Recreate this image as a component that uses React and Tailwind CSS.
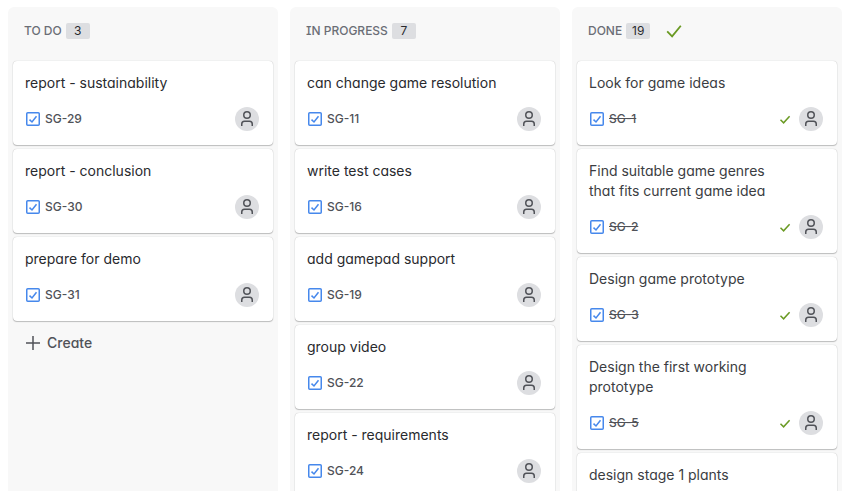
const columns = [
  {
    name: "TO DO",
    count: 3,
    canCreate: true,
    cards: [
      { title: "report - sustainability", id: "SG-29" },
      { title: "report - conclusion", id: "SG-30" },
      { title: "prepare for demo", id: "SG-31" },
    ],
  },
  {
    name: "IN PROGRESS",
    count: 7,
    cards: [
      { title: "can change game resolution", id: "SG-11" },
      { title: "write test cases", id: "SG-16" },
      { title: "add gamepad support", id: "SG-19" },
      { title: "group video", id: "SG-22" },
      { title: "report - requirements", id: "SG-24" },
    ],
  },
  {
    name: "DONE",
    count: 19,
    done: true,
    cards: [
      { title: "Look for game ideas", id: "SG-1" },
      { title: "Find suitable game genres that fits current game idea", id: "SG-2" },
      { title: "Design game prototype", id: "SG-3" },
      { title: "Design the first working prototype", id: "SG-5" },
      { title: "design stage 1 plants" },
    ],
  },
];

function TaskIcon() {
  return (
    <svg className="size-4 shrink-0" viewBox="0 0 16 16" fill="none" stroke="#4688ec" aria-hidden="true">
      <rect x="1.75" y="1.75" width="12.5" height="12.5" rx="1" strokeWidth="1.5" />
      <path d="M4.5 8.6 L7 11 L11.5 5.2" strokeWidth="1.5" />
    </svg>
  );
}

function SmallCheck() {
  return (
    <svg className="size-4 shrink-0" viewBox="0 0 16 16" fill="none" stroke="#6a9a23" aria-hidden="true">
      <path d="M3.5 8.8 L6.6 11.8 L12.6 5.2" strokeWidth="1.5" />
    </svg>
  );
}

function LargeCheck() {
  return (
    <svg className="size-4 shrink-0" viewBox="0 0 16 16" fill="none" stroke="#6a9a23" aria-hidden="true">
      <path d="M1.2 8.4 L6.1 13.4 L14.8 2.7" strokeWidth="1.8" />
    </svg>
  );
}

function Avatar() {
  return (
    <span role="img" aria-label="Unassigned" className="flex size-6 shrink-0 items-center justify-center rounded-full bg-[#dddee1]">
      <svg className="size-4" viewBox="0 0 16 16" fill="none" stroke="#505258" strokeWidth="1.5" aria-hidden="true">
        <circle cx="8" cy="4" r="3.25" />
        <path d="M2.75 15 V13 A2.75 2.75 0 0 1 5.5 10.25 H10.5 A2.75 2.75 0 0 1 13.25 13 V15" />
      </svg>
    </span>
  );
}

function Card({ card, done }) {
  return (
    <li className="shrink-0 rounded-sm bg-white pt-3 pr-[14px] pb-[14px] pl-3 shadow-[0_1px_1px_#1e1f2140,0_0_1px_#1e1f214f]">
      <h3 className={done ? "w-50 text-sm/5 text-[#3b3d42]" : "w-50 text-sm/5 text-[#292a2e]"}>{card.title}</h3>
      <div className="mt-[14px] flex h-6 items-center">
        {card.id && (
          <>
            <TaskIcon />
            <a href={"#" + card.id} className={done ? "ml-1 text-xs/4 font-medium text-[#505258] line-through" : "ml-1 text-xs/4 font-medium text-[#505258]"}>
              {card.id}
            </a>
            <div className="ml-auto flex items-center gap-1.5">
              {done && <SmallCheck />}
              <Avatar />
            </div>
          </>
        )}
      </div>
    </li>
  );
}

function Column({ column }) {
  return (
    <section className="flex min-w-0 flex-col rounded-t-md bg-[#f8f8f8] px-[5px]">
      <header className="flex h-12 shrink-0 items-center pl-[11px]">
        <h2 className="text-xs/4 font-medium text-[#6b6e76]">{column.name}</h2>
        <span className="ml-1 w-6 rounded-xs bg-[#dddee1] text-center text-xs/4 text-[#292a2e]">{column.count}</span>
        {column.done && (
          <span className="ml-4">
            <LargeCheck />
          </span>
        )}
      </header>
      <ul className="mt-[6px] flex flex-col gap-1">
        {column.cards.map((card) => (
          <Card key={card.title} card={card} done={column.done} />
        ))}
      </ul>
      {column.canCreate && (
        <button type="button" className="mt-1 flex h-9 items-center gap-1.5 pl-3 text-sm/5 font-medium text-[#505258]">
          <svg className="size-4" viewBox="0 0 16 16" fill="none" stroke="#505258" strokeWidth="1.5" aria-hidden="true">
            <path d="M8 1 V15 M1 8 H15" />
          </svg>
          Create
        </button>
      )}
    </section>
  );
}

export default function App() {
  return (
    <main className="grid h-screen grid-cols-3 gap-3 overflow-hidden bg-white pt-[7px] pr-[5px] pl-2 font-['Inter','Liberation_Sans',sans-serif] [font-feature-settings:'cv08','cv11']">
      {columns.map((column) => (
        <Column key={column.name} column={column} />
      ))}
    </main>
  );
}
